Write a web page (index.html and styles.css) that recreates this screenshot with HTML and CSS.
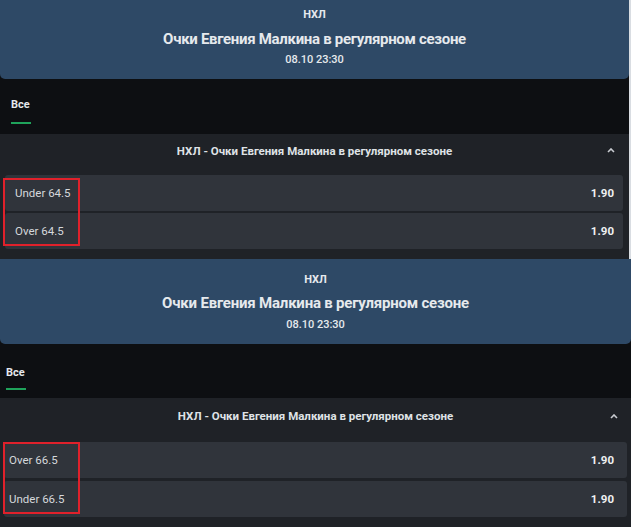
FILE: index.html
```html
<!doctype html>
<html>
<head>
<meta charset="UTF-8">
<title>НХЛ</title>
<link rel="stylesheet" href="styles.css">
</head>
<body>
  <div class="shot shot-one">
    <div class="event">
      <div class="league">НХЛ</div>
      <div class="event-title">Очки Евгения Малкина в регулярном сезоне</div>
      <div class="event-date">08.10 23:30</div>
    </div>
    <div class="tabs">
      <a href="#" class="tab">Все</a>
    </div>
    <div class="market">
      <div class="market-head">
        <span>НХЛ - Очки Евгения Малкина в регулярном сезоне</span>
        <svg class="chevron" width="8" height="5" viewBox="0 0 8 5"><polyline points="1,4 4,1 7,4" fill="none" stroke="#c9ccd1" stroke-width="1.6"/></svg>
      </div>
      <div class="outcomes">
        <div class="outcome"><span>Under 64.5</span><b>1.90</b></div>
        <div class="outcome"><span>Over 64.5</span><b>1.90</b></div>
        <div class="mark"></div>
      </div>
    </div>
  </div>

  <div class="shot shot-two">
    <div class="event">
      <div class="league">НХЛ</div>
      <div class="event-title">Очки Евгения Малкина в регулярном сезоне</div>
      <div class="event-date">08.10 23:30</div>
    </div>
    <div class="tabs">
      <a href="#" class="tab">Все</a>
    </div>
    <div class="market">
      <div class="market-head">
        <span>НХЛ - Очки Евгения Малкина в регулярном сезоне</span>
        <svg class="chevron" width="8" height="5" viewBox="0 0 8 5"><polyline points="1,4 4,1 7,4" fill="none" stroke="#c9ccd1" stroke-width="1.6"/></svg>
      </div>
      <div class="outcomes">
        <div class="outcome"><span>Over 66.5</span><b>1.90</b></div>
        <div class="outcome"><span>Under 66.5</span><b>1.90</b></div>
        <div class="mark"></div>
      </div>
    </div>
  </div>
</body>
</html>
```

FILE: styles.css
```css
html, body {
  margin: 0;
  padding: 0;
}
body {
  background-color: #0d0f12;
  font-family: Roboto, "Liberation Sans", sans-serif;
  color: #e6e9ed;
  width: 631px;
  height: 527px;
  overflow: hidden;
}
a {
  text-decoration: none;
  color: inherit;
}
.shot {
  background-color: #0d0f12;
}
.shot-one {
  height: 259px;
  width: 629px;
  border-right: 2px solid #d9dde2;
}
.shot-two {
  height: 268px;
}
/* event header */
.event {
  background-color: #2e4966;
  border-radius: 0 0 5px 5px;
  text-align: center;
  display: flex;
  flex-direction: column;
  align-items: center;
  box-sizing: border-box;
}
.shot-one .event {
  height: 79px;
  padding-top: 8px;
}
.shot-two .event {
  height: 85px;
  padding-top: 14px;
}
.league {
  font-size: 11px;
  font-weight: 700;
  line-height: 14px;
}
.event-title {
  font-size: 15px;
  font-weight: 700;
  line-height: 18px;
  margin-top: 8px;
  letter-spacing: -0.3px;
}
.event-date {
  font-size: 11px;
  font-weight: 500;
  line-height: 14px;
  margin-top: 5px;
}
.shot-two .event-title {
  margin-top: 7px;
  letter-spacing: -0.2px;
}
.shot-two .event-date {
  margin-top: 6px;
}
/* tabs */
.tabs {
  height: 55px;
  box-sizing: border-box;
  display: flex;
  align-items: flex-start;
  padding-top: 19px;
  padding-left: 11px;
}
.shot-two .tabs {
  height: 54px;
  padding-top: 22px;
  padding-left: 6px;
}
.tab {
  display: block;
  font-size: 11px;
  font-weight: 700;
  line-height: 14px;
  padding: 0 1px 10px 0;
  border-bottom: 2px solid #1fa35b;
}
.shot-two .tab {
  padding-bottom: 8px;
}
/* market */
.market {
  background-color: #1f2227;
}
.shot-one .market {
  height: 125px;
}
.shot-two .market {
  height: 129px;
}
.market-head {
  position: relative;
  height: 41px;
  box-sizing: border-box;
  padding-top: 10px;
  text-align: center;
  font-size: 11.5px;
  line-height: 14px;
  font-weight: 700;
  color: #dfe2e6;
}
.shot-two .market-head {
  height: 44px;
  padding-top: 11px;
}
.chevron {
  position: absolute;
  right: 14px;
  top: 14px;
}
.shot-two .chevron {
  right: 13px;
  top: 16px;
}
.outcomes {
  position: relative;
  display: flex;
  flex-direction: column;
  gap: 2px;
  padding: 0 6px 0 5px;
}
.shot-two .outcomes {
  padding: 0 4px 0 4px;
  gap: 3px;
}
.outcome {
  height: 36px;
  background-color: #30343b;
  border-radius: 3px;
  display: flex;
  align-items: center;
  justify-content: space-between;
  padding: 0 9px 0 10px;
  font-size: 11.5px;
  color: #d5d8dc;
}
.shot-two .outcome {
  padding-left: 5px;
  padding-right: 13px;
}
.outcome b {
  font-weight: 700;
  color: #eef0f2;
}
/* annotation */
.mark {
  position: absolute;
  border: 2px solid #e0212b;
  left: 3px;
  width: 73px;
}
.shot-one .mark {
  top: 3px;
  height: 64px;
}
.shot-two .mark {
  top: 0;
  height: 68px;
}
```
